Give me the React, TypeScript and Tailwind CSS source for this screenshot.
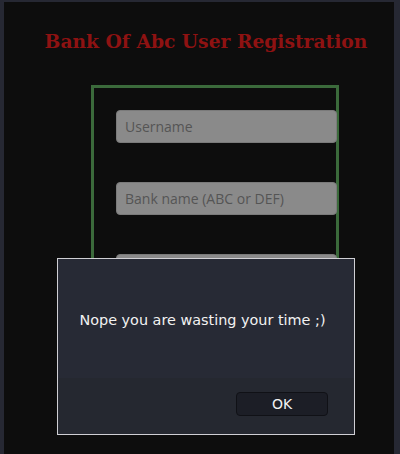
// Registration page with a blocking alert dialog on top
export default function App() {
  return (
    <div className="relative w-[400px] h-[454px] bg-[#262833] pt-[2px] pl-[4px] pr-[6px] overflow-hidden">
      {/* page */}
      <div className="h-full bg-[#0d0d0d] flex flex-col">
        <h1 className="mt-[26px] text-center text-[18.7px] leading-[26px] font-bold text-[#8e1212] [font-family:'DejaVu_Serif',serif] pl-[14px]">
          Bank Of Abc User Registration
        </h1>

        <div className="mt-[31px] ml-[87px] w-[248px] h-[300px] border-[3px] border-[#3b6a3b] pt-[22px] pl-[22px] flex flex-col gap-[39px]">
          <input
            className="w-[221px] h-[33px] rounded-[4px] bg-[#8a8a8a] border border-[#7a7a7a] px-[8px] text-[14px] text-[#444] placeholder:text-[#555] [font-family:'Open_Sans',sans-serif] outline-none"
            placeholder="Username"
          />
          <input
            className="w-[221px] h-[33px] rounded-[4px] bg-[#8a8a8a] border border-[#7a7a7a] px-[8px] text-[14px] text-[#444] placeholder:text-[#555] [font-family:'Open_Sans',sans-serif] outline-none"
            placeholder="Bank name (ABC or DEF)"
          />
          <input
            className="w-[221px] h-[33px] rounded-[4px] bg-[#8a8a8a] border border-[#7a7a7a] px-[8px] text-[14px] outline-none"
          />
        </div>
      </div>

      {/* alert dialog */}
      <div className="absolute left-[57px] top-[258px] w-[298px] h-[177px] border border-[#cfcfd4] bg-[#272a35] flex flex-col [font-family:'DejaVu_Sans',sans-serif]">
        <div className="h-[119px] flex items-center justify-center pt-[4px] pr-[7px]">
          <p className="text-[14.4px] text-[#f2f2f2]">Nope you are wasting your time ;)</p>
        </div>
        <div className="flex-1 bg-[#252830] flex justify-end pr-[26px] pt-[14px]">
          <button className="w-[92px] h-[24px] rounded-[4px] bg-[#1c1e26] border border-[#101116] text-[14px] text-[#f2f2f2] leading-none">
            OK
          </button>
        </div>
      </div>
    </div>
  )
}
